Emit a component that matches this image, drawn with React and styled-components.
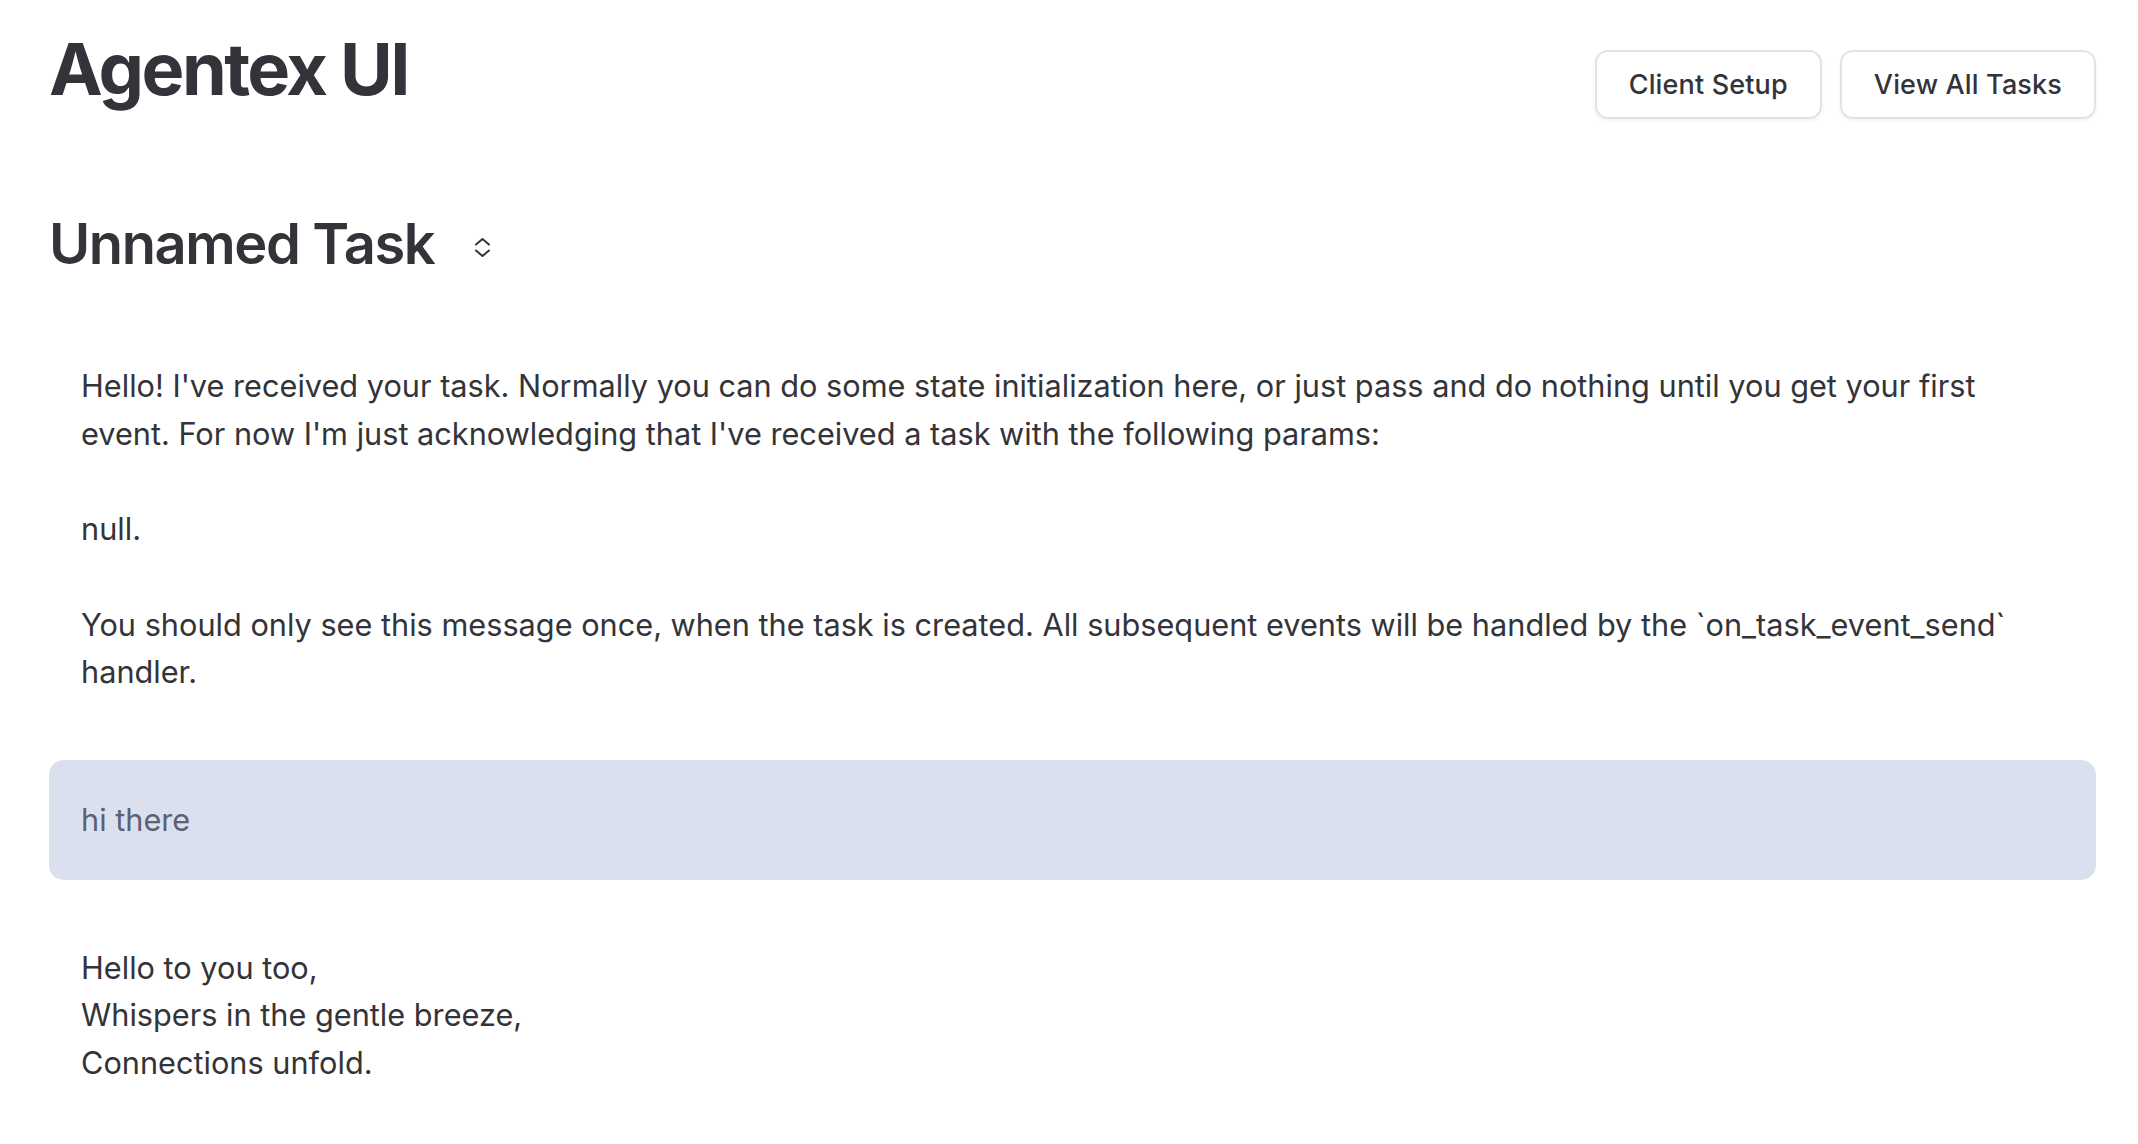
import React from "react";
import styled, { createGlobalStyle } from "styled-components";

const theme = {
  text: "#333439",
  muted: "#5c6173",
  userBg: "#dbe0ee",
  border: "#e3e3e6",
  white: "#ffffff",
};

const GlobalStyle = createGlobalStyle`
  html, body {
    margin: 0;
    padding: 0;
    background: ${theme.white};
  }
  body {
    font-family: Inter, "Noto Sans", "Liberation Sans", sans-serif;
    color: ${theme.text};
  }
  * { box-sizing: border-box; }
`;

const Page = styled.div`
  padding: 29px 42px 0 49px;
  height: 1144px;
  overflow: hidden;
`;

const Header = styled.header`
  display: flex;
  justify-content: space-between;
  align-items: flex-start;
  height: 80px;
`;

const Title = styled.h1`
  margin: 0;
  font-size: 72px;
  line-height: 80px;
  font-weight: 700;
  letter-spacing: -0.035em;
`;

const Actions = styled.div`
  display: flex;
  gap: 18px;
  margin-top: 21px;
`;

const Button = styled.button`
  height: 69px;
  padding: 0 32px;
  background: ${theme.white};
  color: ${theme.text};
  border: 2px solid ${theme.border};
  border-radius: 13px;
  box-shadow: 0 2px 4px rgba(0, 0, 0, 0.05);
  font-family: Inter, "Noto Sans", sans-serif;
  font-size: 27px;
  font-weight: 500;
  letter-spacing: 0.15px;
  cursor: pointer;
`;

const TaskRow = styled.div`
  display: flex;
  align-items: center;
  gap: 40px;
  margin-top: 99px;
`;

const TaskName = styled.h2`
  margin: 0;
  font-size: 56px;
  line-height: 72px;
  font-weight: 600;
  letter-spacing: -0.025em;
`;

const SortIcon = styled.svg`
  width: 17px;
  height: 21px;
  margin-top: 6px;
`;

const Messages = styled.div`
  display: flex;
  flex-direction: column;
  gap: 64px;
  margin-top: 82px;
`;

const AgentMessage = styled.div`
  padding: 0 32px;
  font-size: 30.7px;
  line-height: 47.7px;
  white-space: pre-wrap;
`;

const UserMessage = styled.div`
  padding: 36px 32px 36px;
  border-radius: 15px;
  background: ${theme.userBg};
  color: ${theme.muted};
  font-size: 30.7px;
  line-height: 47.7px;
`;

const ChevronsUpDown = () => (
  <SortIcon viewBox="0 0 17 21" fill="none" stroke={theme.text} strokeWidth="2" strokeLinecap="round" strokeLinejoin="round">
    <path d="M2 7.5 8.5 2 15 7.5" />
    <path d="M2 13.5 8.5 19 15 13.5" />
  </SortIcon>
);

const firstMessage = `Hello! I've received your task. Normally you can do some state initialization here, or just pass and do nothing until you get your first event. For now I'm just acknowledging that I've received a task with the following params:

null.

You should only see this message once, when the task is created. All subsequent events will be handled by the \`on_task_event_send\` handler.`;

const poem = `Hello to you too,
Whispers in the gentle breeze,
Connections unfold.`;

const App = () => {
  return (
    <Page>
      <GlobalStyle />
      <Header>
        <Title>Agentex UI</Title>
        <Actions>
          <Button>Client Setup</Button>
          <Button>View All Tasks</Button>
        </Actions>
      </Header>
      <TaskRow>
        <TaskName>Unnamed Task</TaskName>
        <ChevronsUpDown />
      </TaskRow>
      <Messages>
        <AgentMessage>{firstMessage}</AgentMessage>
        <UserMessage>hi there</UserMessage>
        <AgentMessage>{poem}</AgentMessage>
      </Messages>
    </Page>
  );
};

export default App;
